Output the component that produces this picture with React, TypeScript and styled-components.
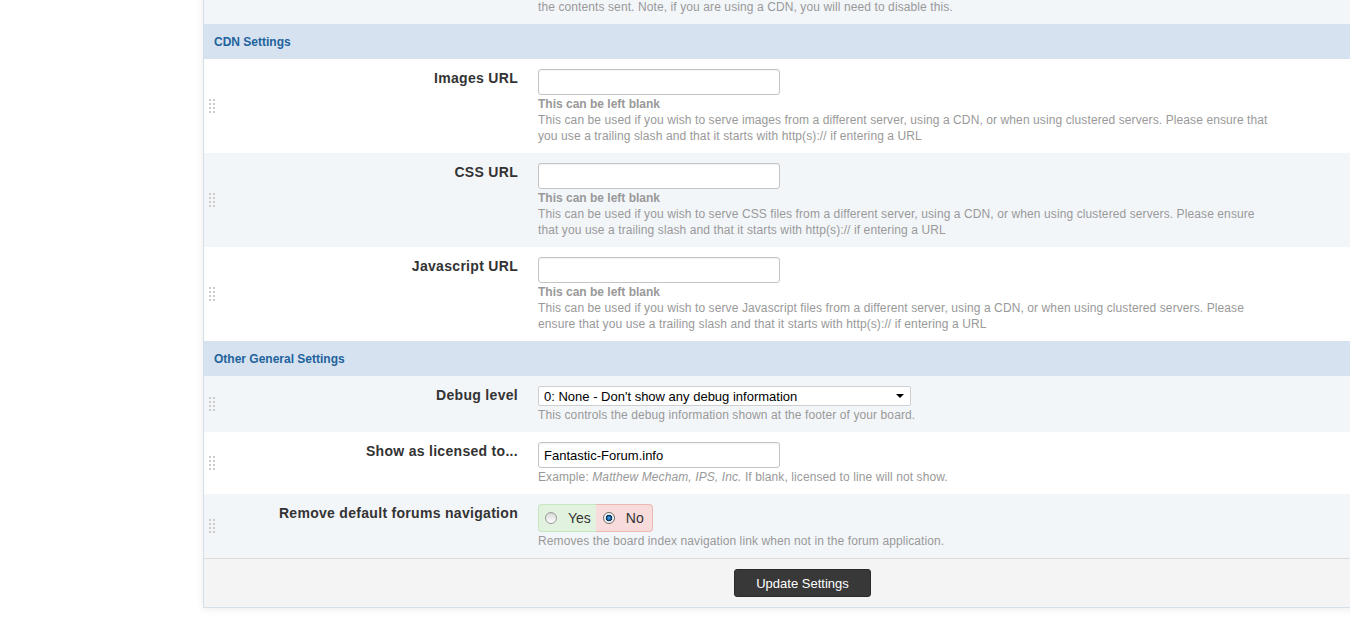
import React from "react";
import styled, { createGlobalStyle } from "styled-components";

const Global = createGlobalStyle`
  html, body { margin: 0; padding: 0; background: #fff; overflow: hidden; }
  body { font-family: "Liberation Sans", Arial, sans-serif; color: #333; }
`;

const Page = styled.div`
  margin-top: -56px;
  padding-left: 203px;
  padding-bottom: 16px;
`;

const Panel = styled.div`
  width: 1199px;
  border: 1px solid #d6dee7;
  border-top: none;
  box-shadow: 0 1px 8px rgba(0, 0, 0, 0.08);
  background: #fff;
`;

const SectionHeader = styled.div`
  height: 35px;
  box-sizing: border-box;
  padding: 1px 0 0 10px;
  line-height: 34px;
  background: #d6e2f0;
  color: #22629c;
  font-size: 12px;
  font-weight: bold;
`;

const Row = styled.div<{ $alt?: boolean }>`
  display: flex;
  align-items: stretch;
  padding: 10px 0 9px;
  background: ${(p) => (p.$alt ? "#f3f6f9" : "#ffffff")};
`;

const GripCell = styled.div`
  flex: 0 0 25px;
  padding: 0 0 2px 5px;
  display: flex;
  align-items: center;
`;

const LabelCell = styled.div`
  flex: 0 0 284px;
  text-align: right;
  font-size: 14px;
  line-height: 18px;
  font-weight: bold;
  letter-spacing: 0.3px;
  color: #333;
`;

const ControlCell = styled.div`
  margin-left: 20px;
  display: flex;
  flex-direction: column;
  align-items: flex-start;
`;

const TextInput = styled.input`
  box-sizing: border-box;
  width: 242px;
  height: 26px;
  margin: 0 0 1px;
  border: 1px solid #c4c4c4;
  border-radius: 3px;
  box-shadow: inset 0 1px 1px rgba(0, 0, 0, 0.05);
  padding: 0 5px;
  font-family: "Liberation Sans", Arial, sans-serif;
  font-size: 13px;
  color: #000;
  background: #fff;
  outline: none;
`;

const SelectWrap = styled.span`
  position: relative;
  display: inline-block;
  margin-bottom: 1px;
  &::after {
    content: "";
    position: absolute;
    right: 7px;
    top: 8px;
    border-left: 4px solid transparent;
    border-right: 4px solid transparent;
    border-top: 4px solid #000;
    pointer-events: none;
  }
`;

const Select = styled.select`
  appearance: none;
  -webkit-appearance: none;
  display: block;
  box-sizing: border-box;
  width: 373px;
  height: 20px;
  margin: 0;
  border: 1px solid #cfcfcf;
  border-radius: 2px;
  padding: 0 4px 0 5px;
  font-family: "Liberation Sans", Arial, sans-serif;
  font-size: 13px;
  color: #000;
  background: #fff;
  outline: none;
`;

const Desc = styled.div`
  max-width: 736px;
  font-size: 12px;
  line-height: 16px;
  letter-spacing: 0.1px;
  color: #999;
`;

const Blank = styled.div`
  font-size: 12px;
  line-height: 16px;
  font-weight: bold;
  color: #999;
`;

const YesNo = styled.div`
  display: flex;
  height: 28px;
  margin-bottom: 1px;
  box-sizing: border-box;
`;

const YesNoPart = styled.label<{ $yes?: boolean }>`
  display: flex;
  align-items: center;
  gap: 11px;
  box-sizing: border-box;
  height: 28px;
  padding: ${(p) => (p.$yes ? "0 5px 0 6px" : "0 8px 0 7px")};
  font-size: 14px;
  color: #333;
  background: ${(p) => (p.$yes ? "#e1f3de" : "#f7dcdb")};
  border: 1px solid ${(p) => (p.$yes ? "#c7e5c2" : "#eab9b6")};
  border-radius: ${(p) => (p.$yes ? "4px 0 0 4px" : "0 4px 4px 0")};
  ${(p) => (p.$yes ? "border-right: none;" : "border-left: none;")}
`;

const Radio = styled.input`
  appearance: none;
  -webkit-appearance: none;
  margin: 0;
  width: 12px;
  height: 12px;
  border-radius: 50%;
  border: 1px solid #9a9a9a;
  background: linear-gradient(#d8d8d8, #ffffff);
  box-sizing: border-box;
  &:checked {
    background: radial-gradient(circle at 50% 50%, #5fb0ea 0, #1b6fb5 1.6px, #0a2c52 2.8px, #0a2c52 3.1px, #f2f2f2 3.6px, #ffffff 6px);
    border-color: #6a6a6a;
  }
`;

const Footer = styled.div`
  border-top: 1px solid #dcdcdc;
  background: #f4f4f4;
  padding: 10px 0;
  display: flex;
  justify-content: center;
`;

const Button = styled.button`
  height: 28px;
  padding: 0 21px;
  margin-left: -2px;
  border: 1px solid #2b2b2b;
  border-radius: 3px;
  background: #383838;
  color: #fff;
  font-family: "Liberation Sans", Arial, sans-serif;
  font-size: 13px;
`;

const Grip = () => (
  <svg width="6" height="14" viewBox="0 0 6 14">
    {[0, 4, 8, 12].map((y) =>
      [0, 4].map((x) => <rect key={`${x}-${y}`} x={x} y={y} width="2" height="2" fill="#cccccc" />)
    )}
  </svg>
);

type RowProps = { alt?: boolean; label?: string; children: React.ReactNode };

const FieldRow = ({ alt, label, children }: RowProps) => (
  <Row $alt={alt}>
    <GripCell>
      <Grip />
    </GripCell>
    <LabelCell>{label}</LabelCell>
    <ControlCell>{children}</ControlCell>
  </Row>
);

const YesNoControl = ({ name, value }: { name: string; value: boolean }) => (
  <YesNo>
    <YesNoPart $yes>
      <Radio type="radio" name={name} defaultChecked={value} />
      Yes
    </YesNoPart>
    <YesNoPart>
      <Radio type="radio" name={name} defaultChecked={!value} />
      No
    </YesNoPart>
  </YesNo>
);

const cdnRows = [
  {
    label: "Images URL",
    desc: "This can be used if you wish to serve images from a different server, using a CDN, or when using clustered servers. Please ensure that you use a trailing slash and that it starts with http(s):// if entering a URL",
  },
  {
    label: "CSS URL",
    desc: "This can be used if you wish to serve CSS files from a different server, using a CDN, or when using clustered servers. Please ensure that you use a trailing slash and that it starts with http(s):// if entering a URL",
  },
  {
    label: "Javascript URL",
    desc: "This can be used if you wish to serve Javascript files from a different server, using a CDN, or when using clustered servers. Please ensure that you use a trailing slash and that it starts with http(s):// if entering a URL",
  },
];

export default function App() {
  return (
    <>
      <Global />
      <Page>
        <Panel>
          <FieldRow alt label="Enable GZIP compression">
            <YesNoControl name="gzip" value={false} />
            <Desc>
              Enabling this will compress the output of each page to reduce bandwidth usage, depending on
              <br />
              the contents sent. Note, if you are using a CDN, you will need to disable this.
            </Desc>
          </FieldRow>
          <SectionHeader>CDN Settings</SectionHeader>
          {cdnRows.map((r, i) => (
            <FieldRow key={r.label} alt={i % 2 === 1} label={r.label}>
              <TextInput type="text" defaultValue="" />
              <Blank>This can be left blank</Blank>
              <Desc>{r.desc}</Desc>
            </FieldRow>
          ))}
          <SectionHeader>Other General Settings</SectionHeader>
          <FieldRow alt label="Debug level">
            <SelectWrap>
              <Select defaultValue="0">
                <option value="0">0: None - Don't show any debug information</option>
                <option value="1">1: Show basic debug information</option>
              </Select>
            </SelectWrap>
            <Desc>This controls the debug information shown at the footer of your board.</Desc>
          </FieldRow>
          <FieldRow label="Show as licensed to...">
            <TextInput type="text" defaultValue="Fantastic-Forum.info" />
            <Desc>
              Example: <i>Matthew Mecham, IPS, Inc.</i> If blank, licensed to line will not show.
            </Desc>
          </FieldRow>
          <FieldRow alt label="Remove default forums navigation">
            <YesNoControl name="nav" value={false} />
            <Desc>Removes the board index navigation link when not in the forum application.</Desc>
          </FieldRow>
          <Footer>
            <Button type="button">Update Settings</Button>
          </Footer>
        </Panel>
      </Page>
    </>
  );
}
